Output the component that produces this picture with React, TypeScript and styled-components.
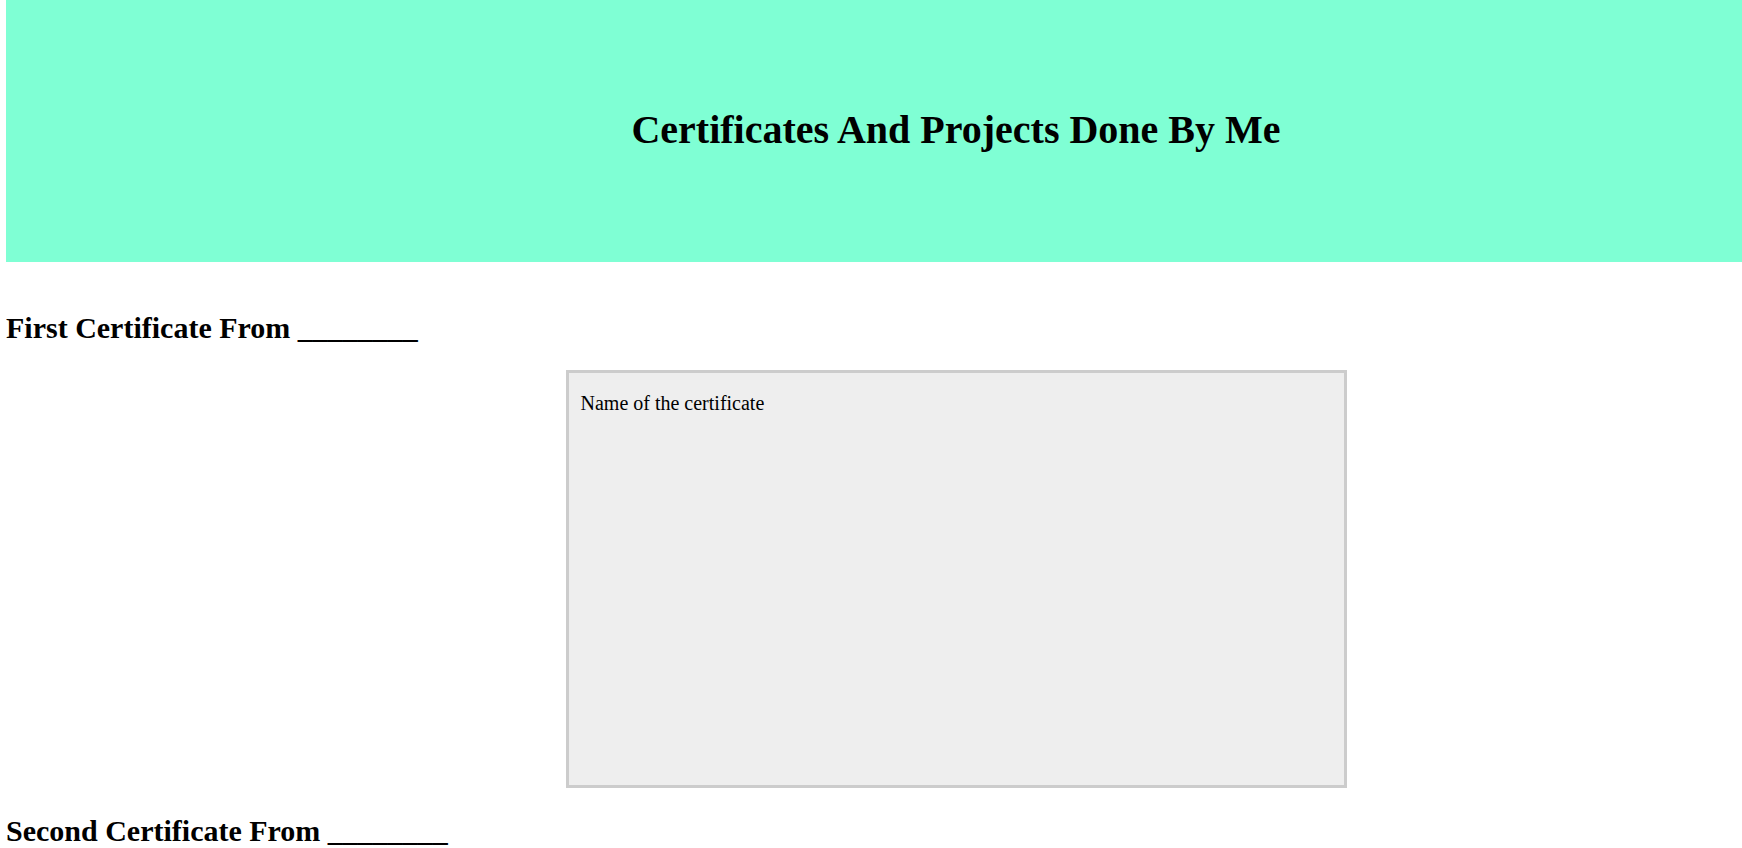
import React from 'react';
import styled, { createGlobalStyle } from 'styled-components';

const GlobalStyle = createGlobalStyle`
  body {
    margin: 0 0 0 6px;
    font-family: "Liberation Serif", "Times New Roman", serif;
    color: #000;
    background: #fff;
    overflow: hidden;
  }
`;

// the original layout is centred on a column that is 164px wider than the viewport
const Banner = styled.header`
  box-sizing: border-box;
  height: 262px;
  padding: 107px 0 0 164px;
  margin-bottom: 49px;
  background: #7fffd4;
  text-align: center;
`;

const Title = styled.h1`
  margin: 0;
  font-size: 40px;
  line-height: 46px;
  font-weight: bold;
`;

const SectionTitle = styled.h2`
  margin: 26px 0 24px;
  font-size: 30px;
  line-height: 34.5px;
  font-weight: bold;
`;

const Stage = styled.div`
  padding-left: 164px;
`;

const CertificateBox = styled.div`
  box-sizing: border-box;
  width: 781px;
  height: 418px;
  margin: 0 auto;
  padding: 19px 12px;
  border: 3px solid #ccc;
  background: #eee;
  font-size: 20px;
  line-height: 23px;
`;

function App() {
  return (
    <>
      <GlobalStyle />
      <Banner>
        <Title>Certificates And Projects Done By Me</Title>
      </Banner>
      <SectionTitle>First Certificate From ________</SectionTitle>
      <Stage>
        <CertificateBox>Name of the certificate</CertificateBox>
      </Stage>
      <SectionTitle>Second Certificate From ________</SectionTitle>
    </>
  );
}

export default App;
